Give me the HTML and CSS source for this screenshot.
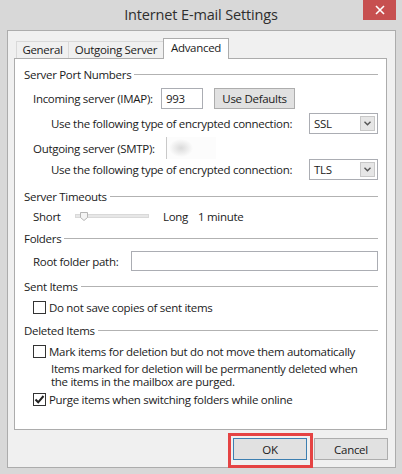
FILE: index.html
```html
<!DOCTYPE html>
<html lang="en">
<head>
  <meta charset="UTF-8">
  <title>Internet E-mail Settings</title>
  <link rel="stylesheet" href="styles.css">
</head>
<body>
  <div class="window">
    <div class="titlebar">
      <div class="title">Internet E-mail Settings</div>
      <button class="close" aria-label="Close">
        <svg width="10" height="10" viewBox="0 0 10 10"><path d="M1 1L9 9M9 1L1 9" stroke="#fff" stroke-width="1.6"/></svg>
      </button>
    </div>

    <div class="client">
      <div class="tabs">
        <div class="tab tab-general">General</div>
        <div class="tab tab-outgoing">Outgoing Server</div>
        <div class="tab tab-advanced active">Advanced</div>
      </div>

      <div class="panel">
        <div class="group-title"><span>Server Port Numbers</span><span class="rule"></span></div>

        <div class="row row-imap sub">
          <span class="label label-imap">Incoming server (IMAP):</span>
          <div class="textbox port">993</div>
          <button class="btn btn-defaults">Use Defaults</button>
        </div>

        <div class="row row-ssl sub2">
          <span>Use the following type of encrypted connection:</span>
          <div class="select">
            <span>SSL</span>
            <span class="arrow"><svg width="7" height="5" viewBox="0 0 7 5"><path d="M0.5 0.8L3.5 3.8L6.5 0.8" fill="none" stroke="#555" stroke-width="1.4"/></svg></span>
          </div>
        </div>

        <div class="row row-smtp sub">
          <span class="label label-smtp">Outgoing server (SMTP):</span>
          <div class="blurred"></div>
        </div>

        <div class="row row-tls sub2">
          <span>Use the following type of encrypted connection:</span>
          <div class="select">
            <span>TLS</span>
            <span class="arrow"><svg width="7" height="5" viewBox="0 0 7 5"><path d="M0.5 0.8L3.5 3.8L6.5 0.8" fill="none" stroke="#555" stroke-width="1.4"/></svg></span>
          </div>
        </div>

        <div class="group-title gt-timeouts"><span>Server Timeouts</span><span class="rule"></span></div>

        <div class="row row-short sub">
          <span class="label label-short">Short</span>
          <div class="slider">
            <svg class="thumb" width="8" height="9" viewBox="0 0 8 9"><path d="M0.5 0.5H7.5V5.5L4 8.5L0.5 5.5Z" fill="#f4f4f4" stroke="#b5b5b5"/></svg>
          </div>
          <span class="label label-long">Long</span>
          <span>1 minute</span>
        </div>

        <div class="group-title gt-folders"><span>Folders</span><span class="rule"></span></div>

        <div class="row row-root sub">
          <span class="label label-root">Root folder path:</span>
          <div class="textbox wide"></div>
        </div>

        <div class="group-title gt-sent"><span>Sent Items</span><span class="rule"></span></div>

        <div class="row row-check row-sent sub">
          <span class="checkbox"></span>
          <span>Do not save copies of sent items</span>
        </div>

        <div class="group-title gt-deleted"><span>Deleted Items</span><span class="rule"></span></div>

        <div class="row row-check row-mark sub">
          <span class="checkbox"></span>
          <span>Mark items for deletion but do not move them automatically</span>
        </div>

        <div class="note sub2">
          <div class="note-line">Items marked for deletion will be permanently deleted when</div>
          <div class="note-line">the items in the mailbox are purged.</div>
        </div>

        <div class="row row-check row-purge sub">
          <span class="checkbox checked">
            <svg width="11" height="11" viewBox="0 0 11 11"><path d="M1.5 5.5L4.2 8.3L9.5 2" fill="none" stroke="#222" stroke-width="2"/></svg>
          </span>
          <span>Purge items when switching folders while online</span>
        </div>
      </div>

      <div class="buttons">
        <button class="btn btn-dialog btn-ok">OK</button>
        <button class="btn btn-dialog">Cancel</button>
      </div>
    </div>
  </div>
</body>
</html>
```

FILE: styles.css
```css
body {
  margin: 0;
  background: #d8d8d8;
  font-family: "Open Sans", "Noto Sans", sans-serif;
  font-size: 11.5px;
  letter-spacing: -0.3px;
  color: #1b1b1b;
}
.window {
  width: 402px;
  height: 474px;
  background: #d8d8d8;
  overflow: hidden;
}
.titlebar {
  height: 30px;
  display: grid;
  grid-template-columns: 1fr auto 1fr;
}
.title {
  grid-column: 2;
  line-height: 30px;
  font-size: 14.5px;
  letter-spacing: -0.15px;
  color: #2e2e2e;
}
.close {
  grid-column: 3;
  justify-self: end;
  align-self: start;
  width: 33px;
  height: 20px;
  margin-right: 6px;
  padding: 0;
  border: none;
  background: #c75050;
  display: flex;
  align-items: center;
  justify-content: center;
}
.client {
  box-sizing: border-box;
  height: 438px;
  margin: 0 6px 0 7px;
  padding: 7px 8px 0 6px;
  background: #f0f0f0;
  border: 1px solid #acacac;
}

/* tabs */
.tabs {
  display: flex;
  align-items: flex-end;
  height: 20px;
  padding-left: 2px;
}
.tab {
  box-sizing: border-box;
  height: 17px;
  border: 1px solid #d9d9d9;
  border-bottom: none;
  text-align: center;
  line-height: 16px;
  background: #f0f0f0;
}
.tab + .tab {
  margin-left: -1px;
}
.tab-general {
  width: 53px;
}
.tab-outgoing {
  width: 96px;
}
.tab-advanced {
  width: 66px;
}
.tab.active {
  position: relative;
  height: 21px;
  margin-bottom: -1px;
  border-color: #acacac;
  background: #fff;
  line-height: 17px;
}

/* panel */
.panel {
  box-sizing: border-box;
  height: 372px;
  background: #fff;
  border: 1px solid #acacac;
  padding: 7px 8px 0 9px;
}
.group-title {
  display: flex;
  align-items: center;
  height: 16px;
}
.rule {
  flex: 1;
  height: 0;
  margin-left: 3px;
  border-top: 1px solid #b2b2b2;
}
.row {
  display: flex;
  align-items: center;
}
.sub {
  padding-left: 9px;
}
.sub2 {
  padding-left: 27px;
}
.label {
  flex: none;
}
.label-imap {
  width: 128px;
}
.label-smtp {
  width: 133px;
}
.label-short {
  width: 42px;
}
.label-long {
  width: 35px;
}
.label-root {
  width: 98px;
}

.row-imap {
  height: 21px;
  margin-top: 6px;
}
.row-ssl {
  height: 21px;
  margin-top: 4px;
  justify-content: space-between;
}
.row-smtp {
  height: 22px;
  margin-top: 3px;
}
.row-tls {
  height: 21px;
  justify-content: space-between;
}
.gt-timeouts {
  margin-top: 8px;
}
.row-short {
  height: 16px;
  margin-top: 4px;
}
.gt-folders {
  margin-top: 6px;
}
.row-root {
  height: 20px;
  margin-top: 5px;
}
.gt-sent,
.gt-deleted {
  margin-top: 7px;
}
.row-check {
  height: 16px;
  margin-top: 5px;
}
.row-purge {
  margin-top: 3px;
}

.textbox {
  box-sizing: border-box;
  height: 100%;
  border: 1px solid #abadb3;
  background: #fff;
  padding-left: 4px;
  line-height: 19px;
}
.port {
  width: 42px;
}
.wide {
  flex: 1;
}
.btn {
  box-sizing: border-box;
  font: inherit;
  letter-spacing: inherit;
  color: #1b1b1b;
  background: #e1e1e1;
  border: 1px solid #adadad;
  padding: 0;
}
.btn-defaults {
  width: 81px;
  height: 21px;
  margin-left: 11px;
}
.select {
  box-sizing: border-box;
  width: 69px;
  height: 21px;
  border: 1px solid #abadb3;
  background: #fff;
  display: flex;
  align-items: center;
  padding-left: 4px;
}
.arrow {
  box-sizing: border-box;
  width: 15px;
  height: 15px;
  margin: 0 2px 0 auto;
  border: 1px solid #c8c8c8;
  background: #e6e6e6;
  display: flex;
  align-items: center;
  justify-content: center;
}
.blurred {
  box-sizing: border-box;
  width: 50px;
  height: 22px;
  border-left: 1px solid #c9c9c9;
  background: radial-gradient(ellipse 12px 9px at 14px 11px, #dadada, #f2f2f2 70%, #fcfcfc);
}
.slider {
  position: relative;
  box-sizing: border-box;
  width: 74px;
  height: 4px;
  margin-right: 14px;
  background: #e7e7e7;
  border: 1px solid #d9d9d9;
}
.thumb {
  position: absolute;
  left: 4px;
  top: -3px;
}
.checkbox {
  box-sizing: border-box;
  flex: none;
  width: 13px;
  height: 13px;
  margin-right: 3px;
  border: 1px solid #333;
  background: #fff;
  display: flex;
  align-items: center;
  justify-content: center;
}
.note {
  margin-top: 3px;
}
.note-line {
  height: 13px;
  line-height: 13px;
}

/* dialog buttons */
.buttons {
  display: flex;
  justify-content: flex-end;
  gap: 7px;
  margin-top: 8px;
  margin-right: -1px;
}
.btn-dialog {
  width: 74px;
  height: 22px;
}
.btn-ok {
  position: relative;
  border-color: #3c7fb1;
}
.btn-ok::after {
  content: "";
  position: absolute;
  top: -6px;
  left: -6px;
  right: -7px;
  bottom: -9px;
  border: 3px solid #e54343;
}
```
